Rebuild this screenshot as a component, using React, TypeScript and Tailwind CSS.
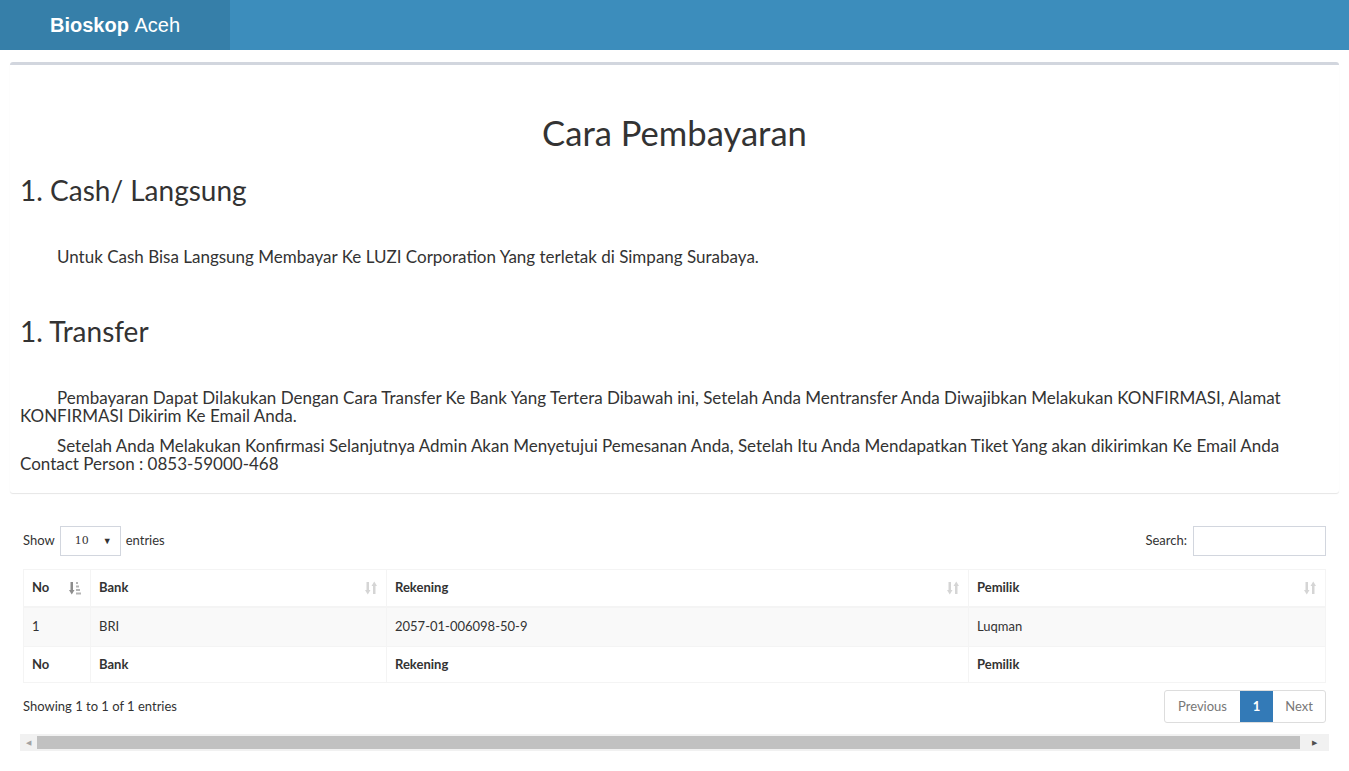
import React from "react";

function SortBoth() {
  return (
    <svg width="12" height="14" viewBox="0 0 12 14" className="text-[#d5d5d5]" fill="currentColor">
      <rect x="1.5" y="1" width="2.5" height="9" />
      <path d="M0 9h5.5L2.75 13.5z" />
      <rect x="8" y="4" width="2.5" height="9" />
      <path d="M6.5 5h5.5L9.25 0.5z" />
    </svg>
  );
}

function SortAsc() {
  return (
    <svg width="12" height="14" viewBox="0 0 12 14" fill="currentColor">
      <g className="text-[#8d8d8d]">
        <rect x="1.5" y="1" width="2.5" height="9" />
        <path d="M0 9h5.5L2.75 13.5z" />
      </g>
      <g className="text-[#b5b5b5]">
        <rect x="7" y="1" width="2" height="2" />
        <rect x="7" y="4.5" width="3" height="2" />
        <rect x="7" y="8" width="4" height="2" />
        <rect x="7" y="11.5" width="5" height="2" />
      </g>
    </svg>
  );
}

export default function App() {
  const body = { fontFamily: "Lato, 'Source Sans Pro', sans-serif" };
  return (
    <div className="min-h-[771px] bg-white text-[#333]" style={body}>
      <header className="flex h-[50px] bg-[#3c8dbc]">
        <div
          className="flex w-[230px] items-center justify-center bg-[#367fa9] text-[20px] text-white"
          style={{ fontFamily: "'Liberation Sans', Arial, sans-serif" }}
        >
          <b>Bioskop</b>&nbsp;Aceh
        </div>
      </header>

      <div className="px-[10px] pt-[12px]">
        <div className="rounded-[3px] border-t-[3px] border-[#d2d6de] bg-white px-[10px] pb-[20px] shadow-[0_1px_1px_rgba(0,0,0,0.1)]">
          <h1 className="pt-[48px] text-center text-[34.6px] leading-[40px]">Cara Pembayaran</h1>
          <h2 className="mt-[20px] text-[28px] leading-[34px]">1. Cash/ Langsung</h2>
          <p className="mt-[40px] indent-[37px] text-[17px] leading-[19px]">
            Untuk Cash Bisa Langsung Membayar Ke LUZI Corporation Yang terletak di Simpang Surabaya.
          </p>
          <h2 className="mt-[48px] text-[28px] leading-[34px]">1. Transfer</h2>
          <p className="mt-[41px] indent-[37px] text-[17px] leading-[18px]">
            Pembayaran Dapat Dilakukan Dengan Cara Transfer Ke Bank Yang Tertera Dibawah ini, Setelah Anda Mentransfer Anda Diwajibkan Melakukan KONFIRMASI, Alamat KONFIRMASI Dikirim Ke Email Anda.
          </p>
          <p className="mt-[12px] indent-[37px] text-[17px] leading-[18px]">
            Setelah Anda Melakukan Konfirmasi Selanjutnya Admin Akan Menyetujui Pemesanan Anda, Setelah Itu Anda Mendapatkan Tiket Yang akan dikirimkan Ke Email Anda
            <br />
            Contact Person : 0853-59000-468
          </p>
        </div>
      </div>

      <div className="px-[23px] pt-[33px] text-[13px]">
        <div className="flex items-center justify-between">
          <div className="flex items-center gap-[5px]">
            <span>Show</span>
            <div className="flex h-[30px] w-[61px] items-center justify-between border border-[#d2d6de] pl-[14px] pr-[8px]">
              <span className="text-[11px]" style={{ fontFamily: "'DejaVu Serif', serif" }}>10</span>
              <span className="text-[9px]">▼</span>
            </div>
            <span>entries</span>
          </div>
          <div className="flex items-center gap-[6px]">
            <span>Search:</span>
            <div className="h-[30px] w-[133px] border border-[#d2d6de]" />
          </div>
        </div>

        <div className="mt-[13px] border border-[#f4f4f4]">
          <div className="grid h-[38px] grid-cols-[66px_296px_582px_1fr] border-b-2 border-[#f4f4f4] font-bold">
            <div className="flex items-center justify-between pl-[8px] pr-[9px]">No<SortAsc /></div>
            <div className="flex items-center justify-between border-l border-[#f4f4f4] pl-[8px] pr-[9px]">Bank<SortBoth /></div>
            <div className="flex items-center justify-between border-l border-[#f4f4f4] pl-[8px] pr-[9px]">Rekening<SortBoth /></div>
            <div className="flex items-center justify-between border-l border-[#f4f4f4] pl-[8px] pr-[9px]">Pemilik<SortBoth /></div>
          </div>
          <div className="grid h-[39px] grid-cols-[66px_296px_582px_1fr] border-b border-[#f4f4f4] bg-[#f9f9f9]">
            <div className="flex items-center pl-[8px]">1</div>
            <div className="flex items-center border-l border-[#f4f4f4] pl-[8px]">BRI</div>
            <div className="flex items-center border-l border-[#f4f4f4] pl-[8px]">2057-01-006098-50-9</div>
            <div className="flex items-center border-l border-[#f4f4f4] pl-[8px]">Luqman</div>
          </div>
          <div className="grid h-[35px] grid-cols-[66px_296px_582px_1fr] font-bold">
            <div className="flex items-center pl-[8px]">No</div>
            <div className="flex items-center border-l border-[#f4f4f4] pl-[8px]">Bank</div>
            <div className="flex items-center border-l border-[#f4f4f4] pl-[8px]">Rekening</div>
            <div className="flex items-center border-l border-[#f4f4f4] pl-[8px]">Pemilik</div>
          </div>
        </div>

        <div className="mt-[7px] flex items-center justify-between">
          <span>Showing 1 to 1 of 1 entries</span>
          <div className="flex h-[33px] overflow-hidden rounded-[3px] border border-[#ddd]">
            <span className="flex w-[75px] items-center justify-center text-[#777]">Previous</span>
            <span className="flex w-[33px] items-center justify-center bg-[#337ab7] font-bold text-white">1</span>
            <span className="flex w-[52px] items-center justify-center text-[#777]">Next</span>
          </div>
        </div>
      </div>

      <div className="mx-[20px] mt-[11px] flex h-[17px] items-center bg-[#f1f1f1]">
        <span className="flex w-[17px] justify-center text-[7px] text-[#a3a3a3]">◀</span>
        <div className="h-[13px] flex-1 bg-[#c1c1c1]" />
        <span className="flex w-[29px] justify-center text-[7px] text-[#505050]">▶</span>
      </div>
    </div>
  );
}
